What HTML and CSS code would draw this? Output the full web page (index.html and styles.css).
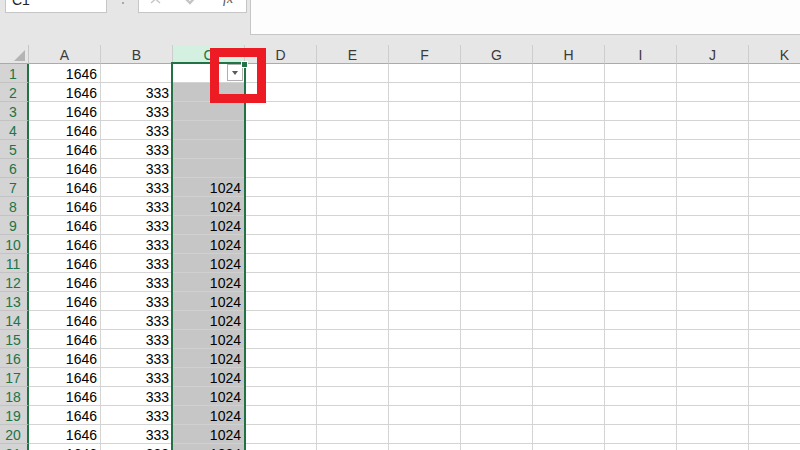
FILE: index.html
```html
<!DOCTYPE html>
<html>
<head>
<meta charset="utf-8">
<link rel="stylesheet" href="styles.css">
</head>
<body>
<div class="toolbar">
  <div class="namebox">C1</div>
  <div class="dot"></div>
  <div class="fbtns">
    <svg width="107" height="22" viewBox="0 0 107 22">
      <path d="M12 6 L21 14 M21 6 L12 14" stroke="#c4c4c4" stroke-width="1.3" fill="none"/>
      <path d="M46 9 L51 14 L59 5" stroke="#c4c4c4" stroke-width="2.4" fill="none"/>
      <text x="84" y="14" class="fx">fx</text>
    </svg>
  </div>
  <div class="formula"></div>
</div>
<div class="gap"></div>
<div class="sheet">
  <div class="row head">
    <div class="corner"><span class="tri"></span></div>
    <div class="ch">A</div><div class="ch">B</div><div class="ch sel-h">C</div>
    <div class="rest-h"><div class="ch">D</div><div class="ch">E</div><div class="ch">F</div><div class="ch">G</div><div class="ch">H</div><div class="ch">I</div><div class="ch">J</div><div class="ch">K</div></div>
  </div>
  <div class="row"><div class="rh">1</div><div class="c">1646</div><div class="c"></div><div class="c active"><span class="dd"><span class="ddt"></span></span></div><div class="rest"></div></div>
  <div class="row"><div class="rh">2</div><div class="c">1646</div><div class="c">333</div><div class="c s"></div><div class="rest"></div></div>
  <div class="row"><div class="rh">3</div><div class="c">1646</div><div class="c">333</div><div class="c s"></div><div class="rest"></div></div>
  <div class="row"><div class="rh">4</div><div class="c">1646</div><div class="c">333</div><div class="c s"></div><div class="rest"></div></div>
  <div class="row"><div class="rh">5</div><div class="c">1646</div><div class="c">333</div><div class="c s"></div><div class="rest"></div></div>
  <div class="row"><div class="rh">6</div><div class="c">1646</div><div class="c">333</div><div class="c s"></div><div class="rest"></div></div>
  <div class="row"><div class="rh">7</div><div class="c">1646</div><div class="c">333</div><div class="c s">1024</div><div class="rest"></div></div>
  <div class="row"><div class="rh">8</div><div class="c">1646</div><div class="c">333</div><div class="c s">1024</div><div class="rest"></div></div>
  <div class="row"><div class="rh">9</div><div class="c">1646</div><div class="c">333</div><div class="c s">1024</div><div class="rest"></div></div>
  <div class="row"><div class="rh">10</div><div class="c">1646</div><div class="c">333</div><div class="c s">1024</div><div class="rest"></div></div>
  <div class="row"><div class="rh">11</div><div class="c">1646</div><div class="c">333</div><div class="c s">1024</div><div class="rest"></div></div>
  <div class="row"><div class="rh">12</div><div class="c">1646</div><div class="c">333</div><div class="c s">1024</div><div class="rest"></div></div>
  <div class="row"><div class="rh">13</div><div class="c">1646</div><div class="c">333</div><div class="c s">1024</div><div class="rest"></div></div>
  <div class="row"><div class="rh">14</div><div class="c">1646</div><div class="c">333</div><div class="c s">1024</div><div class="rest"></div></div>
  <div class="row"><div class="rh">15</div><div class="c">1646</div><div class="c">333</div><div class="c s">1024</div><div class="rest"></div></div>
  <div class="row"><div class="rh">16</div><div class="c">1646</div><div class="c">333</div><div class="c s">1024</div><div class="rest"></div></div>
  <div class="row"><div class="rh">17</div><div class="c">1646</div><div class="c">333</div><div class="c s">1024</div><div class="rest"></div></div>
  <div class="row"><div class="rh">18</div><div class="c">1646</div><div class="c">333</div><div class="c s">1024</div><div class="rest"></div></div>
  <div class="row"><div class="rh">19</div><div class="c">1646</div><div class="c">333</div><div class="c s">1024</div><div class="rest"></div></div>
  <div class="row"><div class="rh">20</div><div class="c">1646</div><div class="c">333</div><div class="c s">1024</div><div class="rest"></div></div>
  <div class="row"><div class="rh">21</div><div class="c">1646</div><div class="c">333</div><div class="c s">1024</div><div class="rest"></div></div>
  <div class="selection"><span class="handle"></span></div>
</div>
<div class="mark"></div>
</body>
</html>
```
FILE: styles.css
```css
html, body {
  margin: 0;
  padding: 0;
}
body {
  width: 800px;
  height: 450px;
  overflow: hidden;
  background: #e6e6e6;
  font-family: "Liberation Sans", Arial, sans-serif;
  position: relative;
}
.toolbar {
  display: flex;
  align-items: flex-start;
  height: 35px;
}
.namebox {
  box-sizing: border-box;
  margin-left: 5px;
  margin-top: -12px;
  width: 102px;
  height: 25px;
  background: #fff;
  border: 1px solid #c6c6c6;
  font-size: 14px;
  line-height: 23px;
  padding-left: 6px;
  color: #222;
}
.dot {
  margin-left: 15px;
  margin-top: 2px;
  width: 2px;
  height: 2px;
  background: #a8a8a8;
}
.fbtns {
  box-sizing: border-box;
  margin-left: 14px;
  margin-top: -12px;
  width: 109px;
  height: 25px;
  background: #fff;
  border: 1px solid #c6c6c6;
}
.fbtns svg {
  display: block;
}
.fx {
  font-family: "Liberation Serif", serif;
  font-style: italic;
  font-size: 14px;
  fill: #555;
}
.formula {
  box-sizing: border-box;
  margin-left: 3px;
  flex: 1;
  height: 35px;
  background: #fdfdfd;
  border-left: 1px solid #c6c6c6;
  border-bottom: 1px solid #c6c6c6;
}
.gap {
  height: 10px;
}
.sheet {
  position: relative;
  width: 821px;
}
.row {
  display: grid;
  grid-template-columns: 29px 72px 72px 72px 576px;
  grid-template-rows: 19px;
  height: 19px;
}
.row > div {
  box-sizing: border-box;
  height: 19px;
}
.corner {
  position: relative;
  background: #e6e6e6;
  border-right: 1px solid #c6c6c6;
  border-bottom: 1px solid #ababab;
}
.tri {
  position: absolute;
  right: 3px;
  bottom: 2px;
  width: 0;
  height: 0;
  border-left: 11px solid transparent;
  border-bottom: 11px solid #b4b4b4;
}
.ch {
  box-sizing: border-box;
  height: 19px;
  background: #e6e6e6;
  border-right: 1px solid #cdcdcd;
  border-bottom: 1px solid #ababab;
  text-align: center;
  font-size: 14px;
  padding-top: 3px;
  line-height: 15px;
  color: #3a3a3a;
}
.ch.sel-h {
  background: #d3f0e0;
  color: #217346;
  border-bottom: 2px solid #217346;
}
.rest-h {
  display: grid;
  grid-template-columns: repeat(8, 72px);
  grid-template-rows: 19px;
}
.rh {
  background: #d4d4d4;
  border-right: 2px solid #217346;
  border-bottom: 1px solid #c3c3c3;
  text-align: center;
  font-size: 14px;
  padding-top: 2px;
  line-height: 16px;
  color: #217346;
  padding-right: 1px;
}
.c {
  position: relative;
  background: #fff;
  border-right: 1px solid #d4d4d4;
  border-bottom: 1px solid #d4d4d4;
  text-align: right;
  padding-right: 3px;
  padding-top: 2px;
  font-size: 14px;
  line-height: 16px;
  color: #000;
}
.c.s {
  background: #c6c6c6;
  border-bottom-color: #d0d0d0;
}
.rest {
  background: #fff repeating-linear-gradient(to right, transparent 0 71px, #d4d4d4 71px 72px);
  border-bottom: 1px solid #d4d4d4;
}
.dd {
  position: absolute;
  right: 1px;
  top: 0;
  box-sizing: border-box;
  width: 16px;
  height: 17px;
  background: #fff;
  border: 1px solid #b0b0b0;
}
.ddt {
  position: absolute;
  left: 4px;
  top: 6px;
  width: 0;
  height: 0;
  border-left: 3.5px solid transparent;
  border-right: 3.5px solid transparent;
  border-top: 4px solid #5a5a5a;
}
.selection {
  position: absolute;
  left: 171px;
  top: 17px;
  width: 75px;
  height: 400px;
  box-sizing: border-box;
  border: 2px solid #217346;
  pointer-events: none;
}
.handle {
  position: absolute;
  right: -4px;
  top: -3px;
  width: 5px;
  height: 5px;
  background: #217346;
  border: 1px solid #fff;
}
.mark {
  position: absolute;
  left: 210px;
  top: 48px;
  width: 56px;
  height: 55px;
  box-sizing: border-box;
  border: 9px solid #ed1c24;
}
```
